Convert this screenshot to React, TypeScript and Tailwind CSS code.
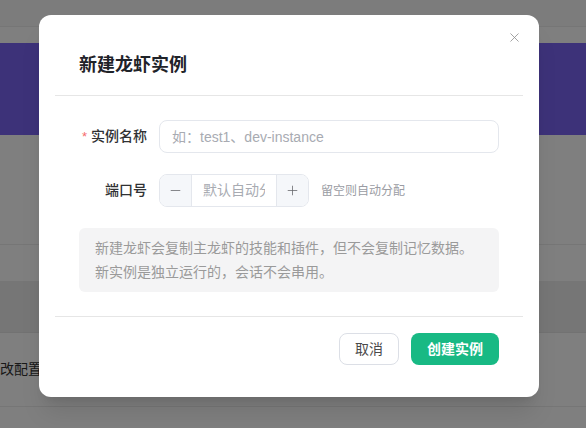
import { X, Minus, Plus } from 'lucide-react'

const font = { fontFamily: '"Liberation Sans", "Noto Sans CJK SC", sans-serif' }

function PageBehind() {
  return (
    <div className="flex flex-col h-[428px] bg-white">
      <div className="h-[27px] bg-[#f8f8f8] border-b border-[#ededed]" />
      <div className="h-[16px]" />
      <div className="h-[92px] bg-[#7b64f2]" />
      <div className="h-[110px] border-b border-[#ededed]" />
      <div className="h-[37px] border-b border-[#ededed]" />
      <div className="h-[51px] bg-[#ececec] border-b border-[#e4e4e4]" />
      <div className="h-[74px] flex items-center border-b border-[#ededed]">
        <span className="text-[14px] text-[#333]">改配置</span>
      </div>
      <div className="flex-1" />
    </div>
  )
}

function CreateInstanceDialog() {
  return (
    <div className="w-[500px] h-[382px] bg-white rounded-[12px] shadow-xl flex flex-col relative">
      <button className="absolute right-[17px] top-[15px] text-[#8f8f8f]">
        <X size={15} strokeWidth={1.3} />
      </button>
      <div className="h-[80px] flex items-end pb-[21px] px-[40px]">
        <h2 className="text-[18px] font-bold text-[#1f2329] leading-none">新建龙虾实例</h2>
      </div>
      <div className="mx-[16px] border-t border-[#e6e6e6]" />

      <div className="px-[40px] pt-[24px] flex flex-col">
        <div className="flex items-center h-[33px]">
          <label className="w-[80px] flex justify-end items-center pr-[12px] text-[14px] text-[#303133] font-medium whitespace-nowrap">
            <span className="text-[#f56c6c] mr-[4px] text-[13px]">*</span>实例名称
          </label>
          <input
            className="w-[340px] h-[33px] rounded-[8px] border border-[#e4e7ed] px-[12px] text-[14px] outline-none placeholder:text-[#a8abb2]"
            placeholder="如：test1、dev-instance"
          />
        </div>

        <div className="flex items-center h-[33px] mt-[21px]">
          <label className="w-[80px] flex justify-end pr-[12px] text-[14px] text-[#303133] font-medium whitespace-nowrap">
            端口号
          </label>
          <div className="w-[150px] h-[33px] rounded-[8px] border border-[#e4e7ed] flex overflow-hidden">
            <div className="w-[32px] bg-[#f5f7fa] border-r border-[#e4e7ed] flex items-center justify-center text-[#606266]">
              <Minus size={15} strokeWidth={1.2} />
            </div>
            <input
              className="w-[84px] px-[11px] text-[14px] text-center outline-none placeholder:text-[#a8abb2]"
              placeholder="默认自动分配"
            />
            <div className="w-[32px] bg-[#f5f7fa] border-l border-[#e4e7ed] flex items-center justify-center text-[#606266]">
              <Plus size={15} strokeWidth={1.2} />
            </div>
          </div>
          <span className="ml-[12px] text-[12px] text-[#9a9ca3]">留空则自动分配</span>
        </div>

        <div className="mt-[21px] w-[420px] h-[64px] bg-[#f4f4f5] rounded-[6px] px-[16px] flex flex-col justify-center text-[14px] leading-[24px] text-[#9a9a9a]">
          <p>新建龙虾会复制主龙虾的技能和插件，但不会复制记忆数据。</p>
          <p>新实例是独立运行的，会话不会串用。</p>
        </div>
      </div>

      <div className="mx-[16px] mt-[24px] border-t border-[#e6e6e6]" />
      <div className="flex justify-end gap-[12px] px-[40px] pt-[16px]">
        <button className="w-[60px] h-[32px] rounded-[8px] border border-[#dcdfe6] text-[14px] text-[#4a4a4a]">取消</button>
        <button className="w-[88px] h-[32px] rounded-[8px] bg-[#18b984] text-[14px] font-bold text-white">创建实例</button>
      </div>
    </div>
  )
}

export default function App() {
  return (
    <div className="relative w-[586px] h-[428px] overflow-hidden" style={font}>
      <PageBehind />
      <div className="absolute inset-0 bg-black/50 pt-[15px] pl-[39px]">
        <CreateInstanceDialog />
      </div>
    </div>
  )
}
